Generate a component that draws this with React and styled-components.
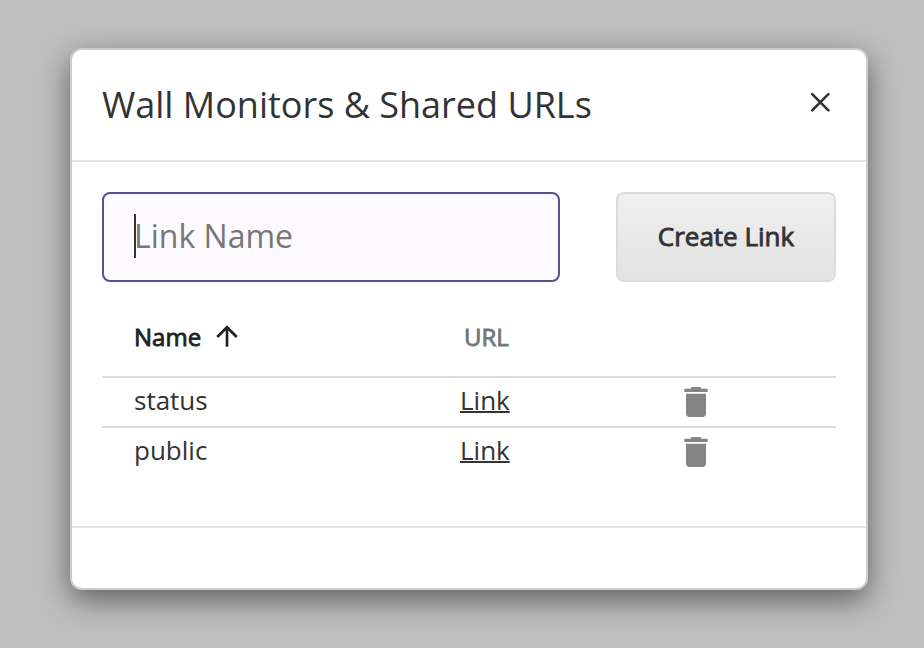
import React from "react";
import styled, { createGlobalStyle } from "styled-components";

const GlobalStyle = createGlobalStyle`
  *, *::before, *::after { box-sizing: border-box; }
  body {
    margin: 0;
    background: #bfbfbf;
    color: #333;
    font-family: "Open Sans", "Noto Sans", sans-serif;
  }
`;

const Backdrop = styled.div`
  height: 648px;
  padding: 48px 56px 0 70px;
  overflow: hidden;
`;

const Dialog = styled.section`
  height: 542px;
  display: flex;
  flex-direction: column;
  background: #fff;
  border: 2px solid #ccc;
  border-radius: 12px;
  box-shadow: 0 10px 30px rgba(0, 0, 0, 0.5);
`;

const Header = styled.header`
  height: 112px;
  padding: 0 30px;
  display: flex;
  align-items: center;
  justify-content: space-between;
  border-bottom: 2px solid #e5e5e5;
`;

const Title = styled.h1`
  margin: 0;
  font-size: 36px;
  line-height: 50px;
  font-weight: 400;
  white-space: nowrap;
`;

const CloseButton = styled.button`
  width: 32px;
  height: 32px;
  margin-bottom: 7px;
  padding: 0;
  border: 0;
  background: none;
  color: #333;

  svg { display: block; }
`;

const Body = styled.div`
  flex: 1;
  padding: 30px 30px 0;
`;

const Form = styled.form`
  display: flex;
  justify-content: space-between;
`;

const Field = styled.label`
  width: 458px;
  height: 90px;
  padding: 0 0 2px 30px;
  display: flex;
  align-items: center;
  border: 2px solid #594f95;
  border-radius: 8px;
  background: #fcfaff;
`;

const Caret = styled.span`
  width: 2px;
  height: 44px;
  margin-right: -2px;
  background: #333;
`;

const Input = styled.input`
  width: 380px;
  padding: 0;
  border: 0;
  outline: 0;
  background: none;
  font: 400 32px/44px "Open Sans", "Noto Sans", sans-serif;

  &::placeholder { color: #777; opacity: 1; }
`;

const CreateButton = styled.button`
  width: 220px;
  height: 90px;
  padding: 0 0 2px;
  border: 2px solid #d8dce0;
  border-radius: 8px;
  background: linear-gradient(#f0f0f0, #e2e2e2) padding-box;
  color: #333;
  font: 400 26px/36px "Open Sans", "Noto Sans", sans-serif;
  -webkit-text-stroke: 0.9px currentColor;
`;

const Row = styled.div`
  height: ${(p) => (p.$head ? 96 : 50)}px;
  padding-left: 32px;
  display: grid;
  grid-template-columns: 326px 216px 1fr;
  align-items: center;
  border-bottom: 2px solid ${(p) => (p.$last ? "transparent" : "#ddd")};
  font-size: 26px;
  line-height: 36px;
`;

const HeadCell = styled.div`
  display: flex;
  align-items: center;
  padding: 16px 0 0 ${(p) => (p.$active ? 0 : 4)}px;
  color: ${(p) => (p.$active ? "#222" : "#757575")};
  font-size: 24px;
  -webkit-text-stroke: 0.85px currentColor;

  svg { margin: -3px 0 0 10px; }
`;

const Cell = styled.div`
  padding-bottom: 4px;
`;

const Link = styled.a`
  color: #333;
  text-decoration: underline;
  text-decoration-thickness: 2px;
  text-decoration-skip-ink: none;
`;

const DeleteButton = styled.button`
  width: 40px;
  height: 40px;
  padding: 0;
  border: 0;
  background: none;
  color: #858585;

  svg { display: block; }
`;

const Footer = styled.footer`
  height: 62px;
  border-top: 2px solid #e5e5e5;
`;

const CloseIcon = () => (
  <svg width="32" height="32" viewBox="0 0 32 32" fill="none" stroke="currentColor" strokeWidth="2.6" strokeLinecap="round">
    <path d="M8.2 8.2 24.4 24.4M24.4 8.2 8.2 24.4" />
  </svg>
);

const ArrowUpIcon = () => (
  <svg width="32" height="32" viewBox="0 0 24 24" fill="currentColor" stroke="none">
    <path d="M4 12l1.41 1.41L11 7.83V20h2V7.83l5.58 5.59L20 12l-8-8-8 8z" />
  </svg>
);

const TrashIcon = () => (
  <svg width="40" height="40" viewBox="0 0 24 24" fill="currentColor">
    <path d="M6 19c0 1.1.9 2 2 2h8c1.1 0 2-.9 2-2V7H6v12zM19 4h-3.5l-1-1h-5l-1 1H5v2h14V4z" />
  </svg>
);

const links = ["status", "public"];

export default function App() {
  return (
    <>
      <GlobalStyle />
      <Backdrop>
        <Dialog role="dialog">
          <Header>
            <Title>Wall Monitors &amp; Shared URLs</Title>
            <CloseButton aria-label="Close"><CloseIcon /></CloseButton>
          </Header>
          <Body>
            <Form>
              <Field>
                <Caret />
                <Input placeholder="Link Name" />
              </Field>
              <CreateButton type="button">Create Link</CreateButton>
            </Form>
            <Row $head>
              <HeadCell $active>Name <ArrowUpIcon /></HeadCell>
              <HeadCell>URL</HeadCell>
            </Row>
            {links.map((name, i) => (
              <Row key={name} $last={i === links.length - 1}>
                <Cell>{name}</Cell>
                <Cell><Link href="#">Link</Link></Cell>
                <DeleteButton aria-label="Delete"><TrashIcon /></DeleteButton>
              </Row>
            ))}
          </Body>
          <Footer />
        </Dialog>
      </Backdrop>
    </>
  );
}
